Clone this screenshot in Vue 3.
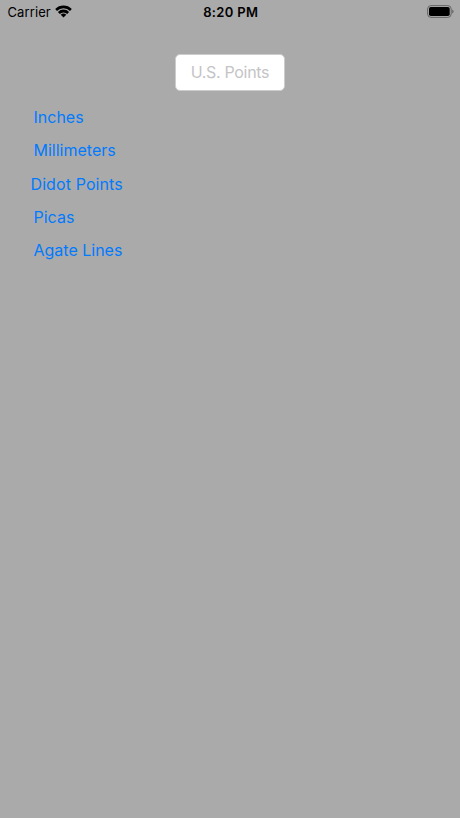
<script setup>
import { ref } from 'vue'

const points = ref('')

const units = [
  { id: 'inches', label: 'Inches' },
  { id: 'millimeters', label: 'Millimeters' },
  { id: 'didot', label: 'Didot Points' },
  { id: 'picas', label: 'Picas' },
  { id: 'agate', label: 'Agate Lines' },
]
</script>

<template>
  <div class="screen">
    <header class="status-bar">
      <div class="carrier">
        <span class="carrier-name">Carrier</span>
        <svg class="wifi" viewBox="0 0 17 13" width="17" height="13">
          <path d="M.2 3.9a11.8 11.8 0 0 1 16.6 0L15 6a9.2 9.2 0 0 0-13 0z" />
          <path d="M2.9 6.9a8 8 0 0 1 11.2 0l-1.9 2a5.3 5.3 0 0 0-7.4 0z" />
          <path d="M5.7 9.8a4 4 0 0 1 5.6 0L8.5 12.6z" />
        </svg>
      </div>
      <span class="time">8:20 PM</span>
      <svg class="battery" viewBox="0 0 27 13" width="27" height="13">
        <rect class="battery-case" x="0.6" y="0.6" width="23.6" height="11.8" rx="3.4" />
        <rect x="2" y="2" width="20.7" height="9" rx="1.8" />
        <path class="battery-cap" d="M25.2 4.5q1.4.5 1.4 2t-1.4 2z" />
      </svg>
    </header>

    <main class="converter">
      <input v-model="points" class="points" type="text" placeholder="U.S. Points" />
      <ul class="units">
        <li v-for="unit in units" :key="unit.id" class="unit" :class="unit.id">
          <span class="unit-label">{{ unit.label }}</span>
        </li>
      </ul>
    </main>
  </div>
</template>

<style>
body {
  margin: 0;
  background: #aaa;
}
</style>

<style scoped>
.screen {
  min-height: 818px;
  background: #aaa;
  font-family: Inter, 'Liberation Sans', sans-serif;
  color: #000;
}

.status-bar {
  display: grid;
  grid-template-columns: 1fr auto 1fr;
  align-items: center;
  box-sizing: border-box;
  height: 24px;
  padding: 0 6px 0 7.5px;
}

.carrier {
  display: flex;
  align-items: center;
  gap: 4.5px;
  font-size: 13px;
  letter-spacing: 0.1px;
}

.wifi {
  margin-top: -2px;
}

.time {
  font-size: 13px;
  font-weight: 600;
  letter-spacing: 0.35px;
}

.battery {
  justify-self: end;
  margin-top: -1px;
}

.battery-case {
  fill: none;
  stroke: #666;
}

.battery-cap {
  fill: #666;
}

.converter {
  display: flex;
  flex-direction: column;
  padding: 30px 30px 0;
}

.points {
  align-self: center;
  box-sizing: border-box;
  width: 110px;
  height: 37px;
  padding: 0 0 2px;
  border: 1px solid #ccc;
  border-radius: 5px;
  background: #fff;
  font: 16px Inter, 'Liberation Sans', sans-serif;
  letter-spacing: -0.32px;
  text-align: center;
  outline: none;
}

.points::placeholder {
  color: #c4c4c6;
  opacity: 1;
}

.units {
  margin: 9.3px 0 0;
  padding: 0;
  list-style: none;
}

.unit {
  display: flex;
  align-items: center;
  height: 33.3px;
  padding-left: 3.5px;
  color: #007aff;
  font-size: 16px;
}

.didot {
  padding-left: 0.5px;
  letter-spacing: 0.1px;
}
</style>
